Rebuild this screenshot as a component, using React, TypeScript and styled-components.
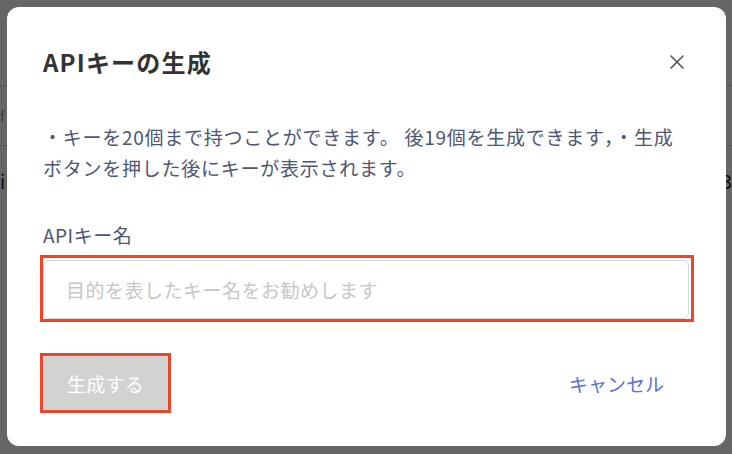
import styled, { createGlobalStyle } from 'styled-components';

const GlobalStyle = createGlobalStyle`
  html, body {
    margin: 0;
    padding: 0;
    background: #ffffff;
  }
  body {
    font-family: "Noto Sans CJK JP", "Noto Sans", sans-serif;
    overflow: hidden;
  }
  * {
    box-sizing: border-box;
  }
`;

// page behind the overlay, only its edges peek out
const Page = styled.div`
  width: 732px;
  height: 454px;
  padding-top: 85px;
`;

const PageRow = styled.div<{ $height: number; $dark?: boolean }>`
  height: ${(p) => p.$height}px;
  border-top: 1px solid #d8d8d8;
  display: flex;
  align-items: center;
  justify-content: space-between;
  font-size: ${(p) => (p.$dark ? 19 : 14)}px;
  color: ${(p) => (p.$dark ? '#222' : '#999')};
`;

const Overlay = styled.div`
  position: fixed;
  inset: 0;
  background: rgba(0, 0, 0, 0.6);
  display: flex;
  padding: 7px 6px 8px 7px;
`;

const Modal = styled.div`
  flex: 1;
  background: #ffffff;
  border-radius: 12px;
  display: flex;
  flex-direction: column;
  padding: 40px 35px 35px 36px;
`;

const Header = styled.div`
  display: flex;
  align-items: center;
  justify-content: space-between;
  padding-right: 7px;
`;

const Title = styled.h2`
  margin: 0;
  font-size: 24px;
  line-height: 30px;
  font-weight: 700;
  letter-spacing: 1.2px;
  color: #333333;
`;

const CloseButton = styled.button`
  border: none;
  background: none;
  padding: 0;
  width: 14px;
  height: 14px;
  display: flex;
  cursor: pointer;
`;

const Description = styled.p`
  margin: 44px 0 0;
  font-size: 19px;
  line-height: 31px;
  letter-spacing: 0.75px;
  color: #4d5674;
`;

const Label = styled.label`
  display: block;
  margin-top: 38px;
  font-size: 19px;
  line-height: 28px;
  letter-spacing: 0.5px;
  color: #4d5674;
`;

const Highlight = styled.div`
  outline: 3px solid #e8472c;
  margin-top: 9px;
  padding: 2px 2px 0 0;
`;

const Input = styled.input`
  display: block;
  width: 100%;
  height: 59px;
  border: 1px solid #d6d6d6;
  border-radius: 6px;
  padding: 0 22px;
  font-family: inherit;
  font-size: 19px;
  letter-spacing: 0.5px;
  color: #333;
  outline: none;

  &::placeholder {
    color: #c6c6c6;
  }
`;

const Footer = styled.div`
  margin-top: 37px;
  display: flex;
  align-items: center;
  justify-content: space-between;
`;

const ButtonFrame = styled.div`
  display: flex;
  outline: 3px solid #e8472c;
`;

const SubmitButton = styled.button`
  width: 125px;
  height: 54px;
  border: none;
  border-radius: 2px;
  background: #d2d2d2;
  color: #ffffff;
  font-family: inherit;
  font-size: 19px;
  letter-spacing: 0.3px;
  cursor: not-allowed;
`;

const CancelButton = styled.button`
  border: none;
  background: none;
  padding: 0 27px;
  font-family: inherit;
  font-size: 19px;
  color: #5a6ee0;
  cursor: pointer;
`;

const CloseIcon = () => (
  <svg width="14" height="14" viewBox="0 0 14 14" fill="none">
    <path d="M1 1L13 13M13 1L1 13" stroke="#555" strokeWidth="1.6" strokeLinecap="round" />
  </svg>
);

const App = () => (
  <>
    <GlobalStyle />
    <Page>
      <PageRow $height={60}>
        <span>f</span>
        <span />
      </PageRow>
      <PageRow $height={70} $dark>
        <span>il</span>
        <span>3</span>
      </PageRow>
    </Page>
    <Overlay>
      <Modal>
        <Header>
          <Title>APIキーの生成</Title>
          <CloseButton aria-label="close">
            <CloseIcon />
          </CloseButton>
        </Header>
        <Description>
          ・キーを20個まで持つことができます。 後19個を生成できます，・生成
          <br />
          ボタンを押した後にキーが表示されます。
        </Description>
        <Label htmlFor="api-key-name">APIキー名</Label>
        <Highlight>
          <Input id="api-key-name" placeholder="目的を表したキー名をお勧めします" />
        </Highlight>
        <Footer>
          <ButtonFrame>
            <SubmitButton>生成する</SubmitButton>
          </ButtonFrame>
          <CancelButton>キャンセル</CancelButton>
        </Footer>
      </Modal>
    </Overlay>
  </>
);

export default App;
